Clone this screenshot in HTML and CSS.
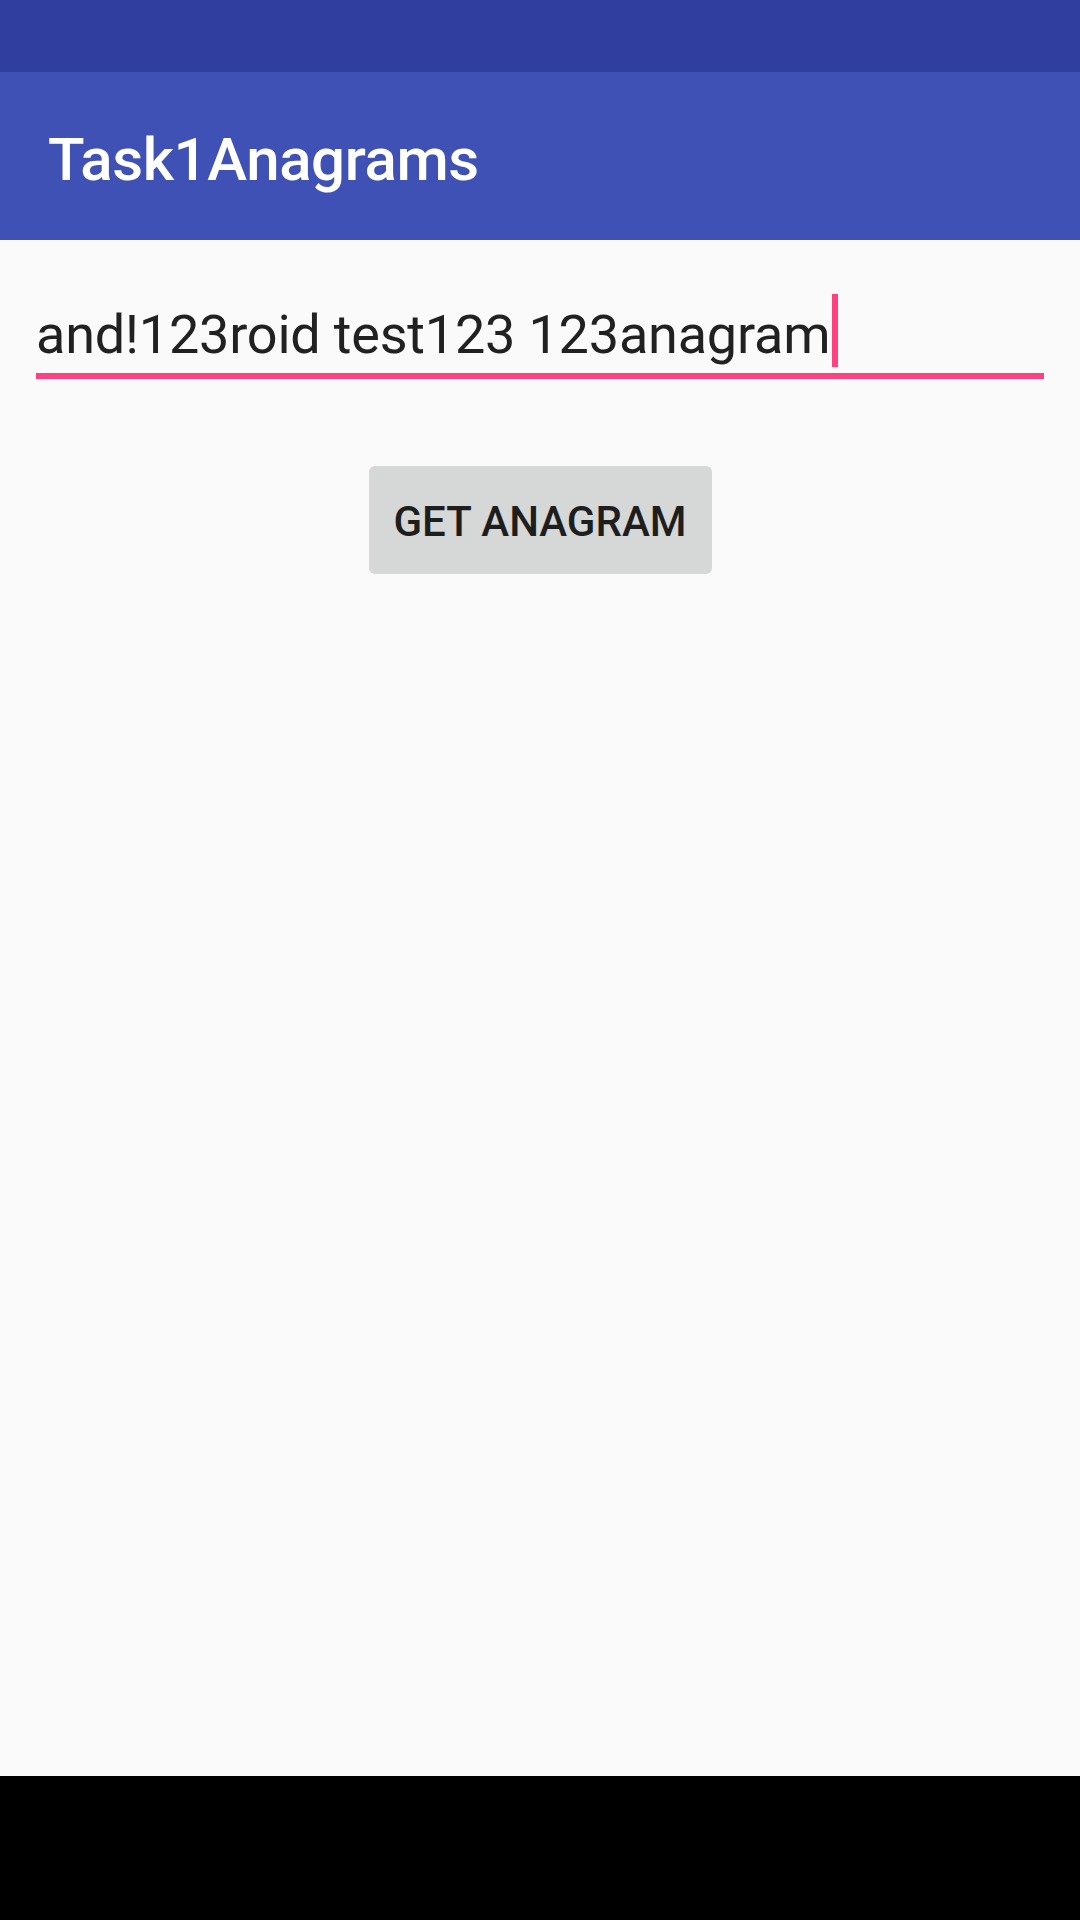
FILE: index.html
```html
<!DOCTYPE html>
<html>
<head>
<meta charset="utf-8">
<link rel="stylesheet" href="styles.css">
</head>
<body>
<div class="screen">
  <div class="status-bar"></div>
  <div class="app-bar"><span class="title">Task1Anagrams</span></div>
  <main class="content">
    <div class="edit">
      <div class="field">
        <span class="field-text">and!123roid test123 123anagram</span>
        <span class="cursor"></span>
      </div>
      <div class="underline"></div>
    </div>
    <div class="actions">
      <button class="btn">GET ANAGRAM</button>
    </div>
  </main>
  <div class="nav-bar"></div>
</div>
</body>
</html>
```
FILE: styles.css
```css
html, body {
  margin: 0;
  padding: 0;
}
body {
  width: 1080px;
  height: 1920px;
  overflow: hidden;
  font-family: Roboto, "Noto Sans", sans-serif;
  background: #FAFAFA;
}
.screen {
  display: flex;
  flex-direction: column;
  height: 1920px;
}
.status-bar {
  height: 72px;
  background: #303F9F;
  flex: none;
}
.app-bar {
  height: 168px;
  box-sizing: border-box;
  padding: 7px 0 0 48px;
  background: #3F51B5;
  display: flex;
  align-items: center;
  flex: none;
}
.title {
  color: #FFFFFF;
  font-size: 60px;
  line-height: 60px;
  font-weight: 500;
  letter-spacing: -0.4px;
}
.content {
  flex: 1;
  background: #FAFAFA;
}
.edit {
  margin: 54px 36px 0 36px;
}
.field {
  display: flex;
  align-items: flex-start;
  height: 73px;
}
.field-text {
  font-size: 54px;
  line-height: 64px;
  margin-top: 9px;
  color: #212121;
  white-space: nowrap;
  letter-spacing: -0.2px;
}
.cursor {
  width: 6px;
  height: 73px;
  margin-left: 2px;
  background: #FF4081;
}
.underline {
  margin-top: 6px;
  height: 6px;
  background: #FF4081;
}
.actions {
  display: flex;
  justify-content: center;
  margin-top: 87px;
}
.btn {
  width: 343px;
  height: 108px;
  box-sizing: border-box;
  padding: 3px 0 0 0;
  border: none;
  border-radius: 6px;
  background: #D6D7D7;
  color: #1E1E1E;
  font-family: Roboto, "Noto Sans", sans-serif;
  font-size: 42px;
  line-height: 42px;
  font-weight: 500;
  display: flex;
  align-items: center;
  justify-content: center;
}
.nav-bar {
  height: 144px;
  background: #000000;
  flex: none;
}
```
